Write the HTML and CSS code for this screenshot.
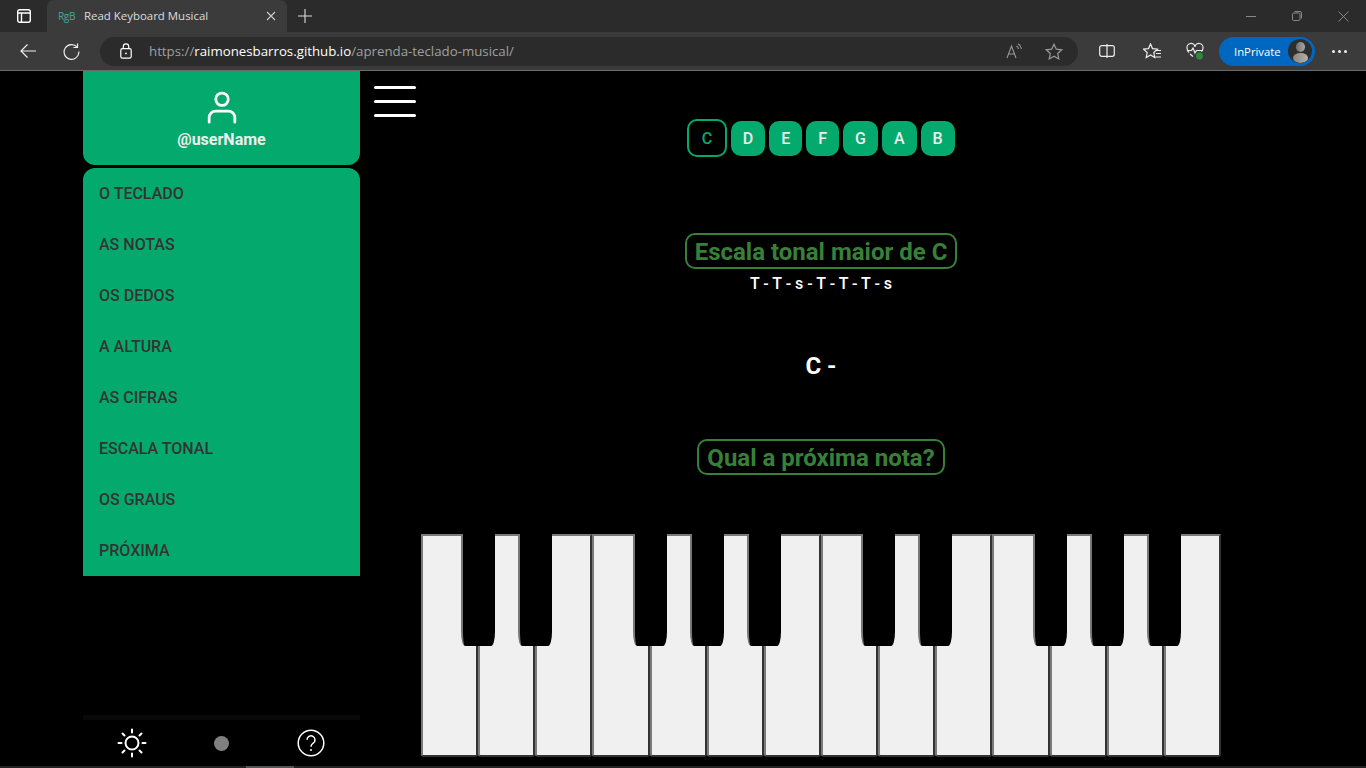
FILE: index.html
```html
<!DOCTYPE html>
<html lang="en">
<head>
    <meta charset="UTF-8">
    <meta name="viewport" content="width=device-width, initial-scale=1.0">
    <title>Read Keyboard Musical</title>
    <link rel="stylesheet" href="styles.css">
</head>
<body>
    <!-- Browser frame -->
    <div class="tab-strip">
        <div class="tab-box">
            <svg width="16" height="16" viewBox="0 0 16 16" fill="none" stroke="#fff" stroke-width="1.4"><rect x="1.7" y="1.7" width="12.6" height="12.6" rx="2"/><path d="M1.7 5h12.6M5.5 5v9.3"/></svg>
        </div>
        <div class="tab">
            <span class="favicon">RgB</span>
            <span class="tab-title">Read Keyboard Musical</span>
            <svg class="tab-close" width="10" height="10" viewBox="0 0 10 10" stroke="#ccc" stroke-width="1.1"><path d="M1 1l8 8M9 1l-8 8"/></svg>
        </div>
        <svg class="new-tab" width="14" height="14" viewBox="0 0 14 14" stroke="#ddd" stroke-width="1.1"><path d="M7 0v14M0 7h14"/></svg>
        <div class="window-btns">
            <svg width="10" height="10" viewBox="0 0 10 10" stroke="#888" stroke-width="1"><path d="M0 5.5h10"/></svg>
            <svg width="10" height="10" viewBox="0 0 10 10" fill="none" stroke="#888" stroke-width="1"><rect x="0.5" y="2" width="7.5" height="7.5" rx="1.2"/><path d="M2.5 0.5h5.5a1.5 1.5 0 0 1 1.5 1.5v5.5"/></svg>
            <svg width="11" height="11" viewBox="0 0 11 11" stroke="#888" stroke-width="1"><path d="M0.5 0.5l10 10M10.5 0.5l-10 10"/></svg>
        </div>
    </div>
    <div class="toolbar">
        <svg class="back" width="16" height="14" viewBox="0 0 16 14" fill="none" stroke="#eee" stroke-width="1.2"><path d="M16 7H1M7.500 0.500L1 7l6.500 6.500"/></svg>
        <svg class="reload" width="17" height="17" viewBox="0 0 17 17" fill="none" stroke="#eee" stroke-width="1.2"><path d="M14.200 4.200A7.400 7.400 0 1 0 15.900 8.500M14.500 0.500v4h-4"/></svg>
        <div class="address-bar">
            <svg class="lock" width="12" height="16" viewBox="0 0 12 16" fill="none" stroke="#fff" stroke-width="1.2"><rect x="0.8" y="5.6" width="10.4" height="9.6" rx="1.6"/><path d="M3.3 5.6V3.6a2.7 2.7 0 0 1 5.4 0v2"/><circle cx="6" cy="10.4" r="0.9" fill="#fff" stroke="none"/></svg>
            <span class="url">https://<b>raimonesbarros.github.io</b>/aprenda-teclado-musical/</span>
            <svg class="read-aloud" width="17" height="16" viewBox="0 0 17 16" fill="none" stroke="#999" stroke-width="1.1"><path d="M1 15L5.500 3 10 15M2.600 11h5.800M10.500 3a4 4 0 0 1 2 3M12 0.800a7 7 0 0 1 3.500 5"/></svg>
            <svg class="star" width="18" height="17" viewBox="0 0 18 17" fill="none" stroke="#999" stroke-width="1.2"><path d="M9 1.2l2.300 5 5.400.6-4 3.700 1.100 5.400L9 13.200l-4.800 2.700 1.100-5.400-4-3.700 5.400-.6z"/></svg>
        </div>
        <svg class="split" width="16" height="14" viewBox="0 0 16 14" fill="none" stroke="#eee" stroke-width="1.2"><rect x="0.7" y="1.7" width="14.6" height="10.6" rx="2"/><path d="M8 0v14"/></svg>
        <svg class="favs" width="18" height="17" viewBox="0 0 18 17" fill="none" stroke="#eee" stroke-width="1.2"><path d="M7.500 1l2 4.600 5 .5-3.700 3.400 1 5L7.500 12l-4.300 2.500 1-5L.5 6.100l5-.5zM13.500 7.500H18M13 10.500h5M12.500 14H18"/></svg>
        <svg class="health" width="18" height="18" viewBox="0 0 18 18" fill="none" stroke="#eee" stroke-width="1.2"><path d="M3 10.500C1.500 9 1 8 1 6a3.800 3.800 0 0 1 8-1 3.800 3.800 0 0 1 8 1c0 1.500-.5 2.500-1.500 3.700M1 8.500h4.500l1.500-2.500 2 5 1.500-2.500h6.500M4 12l3 2.500"/><circle cx="13.500" cy="14" r="3.500" fill="#2c8a3c" stroke="none"/></svg>
        <div class="inprivate">
            <span>InPrivate</span>
            <div class="avatar"><i class="avatar-head"></i><i class="avatar-body"></i></div>
        </div>
        <div class="more"><i></i><i></i><i></i></div>
    </div>

    <!-- Page -->
    <div class="page">
        <aside class="sidebar">
            <div class="profile">
                <svg width="32" height="36" viewBox="0 0 32 36" fill="none" stroke="#fff" stroke-width="3" stroke-linecap="round"><circle cx="16" cy="9" r="6.800"/><path d="M2 34v-5a7 7 0 0 1 7-7h14a7 7 0 0 1 7 7v5"/></svg>
                <div class="user-name">@userName</div>
            </div>
            <nav class="menu">
                <a class="menu-item">O TECLADO</a>
                <a class="menu-item">AS NOTAS</a>
                <a class="menu-item">OS DEDOS</a>
                <a class="menu-item">A ALTURA</a>
                <a class="menu-item">AS CIFRAS</a>
                <a class="menu-item">ESCALA TONAL</a>
                <a class="menu-item">OS GRAUS</a>
                <a class="menu-item">PRÓXIMA</a>
            </nav>
            <div class="side-footer">
                <svg width="30" height="30" viewBox="0 0 30 30" fill="none" stroke="#fff" stroke-width="2" stroke-linecap="round"><circle cx="15" cy="15" r="6.500"/><path d="M15 1.500v3M15 25.500v3M1.500 15h3M25.500 15h3M5.500 5.500l2 2M22.500 22.500l2 2M24.500 5.500l-2 2M7.500 22.500l-2 2"/></svg>
                <span class="toggle-dot"></span>
                <svg width="28" height="28" viewBox="0 0 28 28" fill="none" stroke="#fff" stroke-width="1.500"><circle cx="14" cy="14" r="12.800"/><path d="M10 10.800a4 4 0 1 1 6.200 3.400c-1.500 1-2.200 1.800-2.200 3.600"/><circle cx="14" cy="21" r="1" fill="#fff" stroke="none"/></svg>
            </div>
        </aside>

        <div class="burger-col">
            <div class="burger"><i></i><i></i><i></i></div>
        </div>

        <main class="content">
            <div class="notes">
                <button class="note active">C</button>
                <button class="note">D</button>
                <button class="note">E</button>
                <button class="note">F</button>
                <button class="note">G</button>
                <button class="note">A</button>
                <button class="note">B</button>
            </div>
            <h2 class="label scale-title">Escala tonal maior de C</h2>
            <div class="pattern">T - T - s - T - T - T - s</div>
            <div class="answer">C -</div>
            <h2 class="label question">Qual a próxima nota?</h2>
            <div class="piano">
                <div class="white"><span class="black"></span></div>
                <div class="white"><span class="black"></span></div>
                <div class="white"></div>
                <div class="white"><span class="black"></span></div>
                <div class="white"><span class="black"></span></div>
                <div class="white"><span class="black"></span></div>
                <div class="white"></div>
                <div class="white"><span class="black"></span></div>
                <div class="white"><span class="black"></span></div>
                <div class="white"></div>
                <div class="white"><span class="black"></span></div>
                <div class="white"><span class="black"></span></div>
                <div class="white"><span class="black"></span></div>
                <div class="white"></div>
            </div>
        </main>
    </div>
    <div class="bottom-strip"><span class="strip-thumb"></span></div>
</body>
</html>
```

FILE: styles.css
```css
* {
    box-sizing: border-box;
}

html, body {
    height: 768px;
    overflow: hidden;
}

body {
    margin: 0;
    background-color: #000;
    font-family: Roboto, sans-serif;
}

/* Browser frame */
.tab-strip {
    height: 32px;
    background-color: #2b2b2b;
    display: flex;
    align-items: center;
}

.tab-box {
    width: 47px;
    display: flex;
    justify-content: center;
}

.tab {
    width: 240px;
    height: 32px;
    background-color: #3b3b3b;
    border-radius: 7px 7px 0 0;
    display: flex;
    align-items: center;
    padding-left: 11px;
    padding-right: 11px;
    padding-bottom: 1px;
    font-family: "Open Sans", sans-serif;
    font-size: 11.45px;
    color: #ddd;
}

.favicon {
    width: 26px;
    font-size: 10px;
    letter-spacing: -0.3px;
    color: #3fae9a;
}

.tab-title {
    flex: 1;
}

.new-tab {
    margin-left: 11px;
}

.window-btns {
    margin-left: auto;
    width: 120px;
    padding-left: 0;
    padding-right: 17px;
    display: flex;
    justify-content: space-between;
    align-items: center;
}

.toolbar {
    height: 39px;
    background-color: #3b3b3b;
    border-bottom: 1px solid #6a6a6a;
    display: flex;
    align-items: center;
}

.back {
    margin-left: 20px;
}

.reload {
    margin-left: 27px;
}

.address-bar {
    width: 978px;
    height: 29px;
    margin-left: 20px;
    border-radius: 15px;
    background-color: #2b2b2b;
    display: flex;
    align-items: center;
    padding-left: 20px;
    font-family: "Open Sans", sans-serif;
    font-size: 13.27px;
    color: #a0a0a0;
}

.url {
    margin-left: 17px;
    flex: 1;
}

.url b {
    font-weight: 400;
    color: #fff;
}

.read-aloud {
    margin-right: 22px;
}

.star {
    margin-right: 15px;
}

.split {
    margin-left: 21px;
}

.favs {
    margin-left: 28px;
}

.health {
    margin-left: 25px;
}

.inprivate {
    width: 96px;
    height: 29px;
    margin-left: 15px;
    border-radius: 15px;
    background-color: #0067c0;
    display: flex;
    align-items: center;
    justify-content: space-between;
    padding: 0 3px 0 15px;
    font-family: "Open Sans", sans-serif;
    font-size: 11.3px;
    color: #fff;
}

.avatar {
    width: 24px;
    height: 24px;
    border-radius: 50%;
    background-color: #2e2e2e;
    overflow: hidden;
    display: flex;
    flex-direction: column;
    align-items: center;
    padding-top: 3px;
}

.avatar-head {
    width: 9px;
    height: 11px;
    border-radius: 50%;
    background: linear-gradient(to right, #6f6f6f, #a8a8a8);
}

.avatar-body {
    width: 15px;
    height: 12px;
    margin-top: 1px;
    border-radius: 50%;
    background: linear-gradient(to right, #8a8680, #b5b0a8);
}

.more {
    margin-left: 17px;
    display: flex;
    gap: 3px;
}

.more i {
    width: 3px;
    height: 3px;
    border-radius: 50%;
    background-color: #eee;
}

/* Page */
.page {
    height: 695px;
    display: flex;
}

.sidebar {
    width: 277px;
    margin-left: 83px;
    display: flex;
    flex-direction: column;
}

.profile {
    height: 94px;
    background-color: #04aa6d;
    border-radius: 0 0 12px 12px;
    display: flex;
    flex-direction: column;
    align-items: center;
    padding-top: 20px;
}

.profile svg {
    height: 33px;
}

.user-name {
    margin-top: 6px;
    font-size: 16px;
    font-weight: 700;
    color: #eee;
}

.menu {
    margin-top: 3px;
    background-color: #04aa6d;
    border-radius: 12px 12px 0 0;
}

.menu-item {
    display: block;
    height: 51px;
    line-height: 51px;
    padding-left: 16px;
    font-size: 16px;
    font-weight: 500;
    color: #333;
}

.side-footer {
    margin-top: auto;
    height: 51px;
    border-top: 5px solid #080808;
    display: flex;
    align-items: center;
    padding-left: 34px;
    padding-right: 35px;
    justify-content: space-between;
}

.toggle-dot {
    width: 15px;
    height: 15px;
    margin-right: 1px;
    border-radius: 50%;
    background-color: #808080;
}

.burger-col {
    width: 61px;
    padding-left: 14px;
    padding-top: 15px;
}

.burger {
    width: 42px;
}

.burger i {
    display: block;
    height: 3px;
    margin-bottom: 11px;
    border-radius: 2px;
    background-color: #fff;
}

.content {
    width: 800px;
    display: flex;
    flex-direction: column;
    align-items: center;
}

.notes {
    margin-top: 48px;
    height: 38px;
    display: flex;
    align-items: center;
    gap: 4px;
}

.note {
    height: 35px;
    padding: 0 12px;
    border: none;
    border-radius: 10px;
    background-color: #04aa6d;
    font-family: Roboto, sans-serif;
    font-size: 16px;
    font-weight: 500;
    color: #eee;
}

.note.active {
    height: 38px;
    padding: 0 12.5px;
    border: 2px solid #04aa6d;
    background-color: #000;
    color: #04aa6d;
}

.label {
    margin: 0;
    height: 36px;
    line-height: 34px;
    padding: 0 8px;
    border: 2px solid #388038;
    border-radius: 10px;
    font-size: 24px;
    font-weight: 700;
    color: #388038;
}

.scale-title {
    margin-top: 76px;
}

.pattern {
    margin-top: 5px;
    font-size: 16px;
    font-weight: 500;
    color: #fff;
}

.answer {
    margin-top: 57px;
    font-size: 24px;
    font-weight: 700;
    color: #fff;
    line-height: 32px;
}

.question {
    margin-top: 57px;
}

/* Piano */
.piano {
    margin-top: 59px;
    width: 800px;
    height: 223px;
    display: flex;
}

.white {
    flex: 1;
    position: relative;
    background-color: #f0f0f0;
    border: 2px solid #7a7a7a;
    border-right-color: #333;
    border-bottom-color: #333;
    border-radius: 0 0 3px 3px;
}

.black {
    position: absolute;
    top: -2px;
    right: -19px;
    z-index: 1;
    width: 34px;
    height: 112px;
    background-color: #000;
    border-left: 2px solid #777;
    border-radius: 0 0 4px 4px / 0 0 14px 14px;
}

.bottom-strip {
    height: 2px;
    background-color: #222;
}

.strip-thumb {
    display: block;
    width: 48px;
    height: 2px;
    margin-left: 246px;
    background-color: #555;
}
```
